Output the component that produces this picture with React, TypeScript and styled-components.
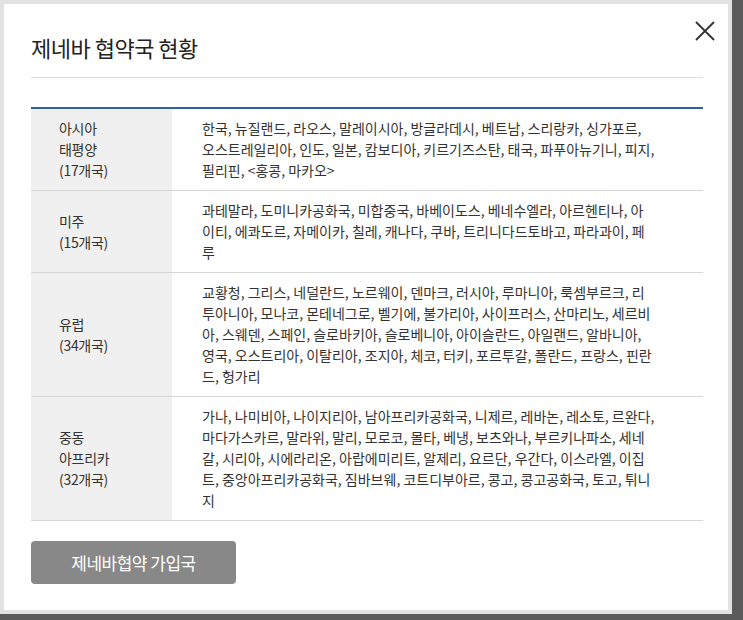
import React from 'react';
import styled, { createGlobalStyle } from 'styled-components';

const Global = createGlobalStyle`
  html, body { margin: 0; padding: 0; }
  body {
    background: #5b5b5b;
    font-family: "Noto Sans CJK KR", "Noto Sans", sans-serif;
  }
`;

const Overlay = styled.div`
  width: 743px;
  height: 620px;
  box-sizing: border-box;
  padding: 0 11px 6px 0;
  background: #5b5b5b;
`;

const Frame = styled.div`
  height: 100%;
  box-sizing: border-box;
  border: 4px solid #e2e2e2;
  background: #fff;
`;

const Modal = styled.div`
  position: relative;
  padding: 0 25px 0 27px;
`;

const Title = styled.h2`
  margin: 0;
  padding: 27px 0 14px;
  font-size: 22px;
  font-weight: 400;
  color: #222;
  letter-spacing: -0.5px;
  border-bottom: 1px solid #ddd;
`;

const Close = styled.button`
  position: absolute;
  top: 14px;
  right: 10px;
  width: 26px;
  height: 26px;
  border: 0;
  background: none;
  padding: 0;
  cursor: pointer;
`;

const Table = styled.table`
  margin-top: 29px;
  width: 100%;
  border-collapse: collapse;
  border-top: 2px solid #2c5fa8;
`;

const Row = styled.tr`
  border-bottom: 1px solid #d6d6d6;
`;

const Head = styled.th`
  width: 141px;
  box-sizing: border-box;
  background: #f0f0f0;
  text-align: left;
  font-weight: 400;
  font-size: 14px;
  line-height: 21px;
  color: #333;
  padding: 9px 0 9px 28px;
  letter-spacing: -0.3px;
`;

const Cell = styled.td`
  font-size: 14px;
  line-height: 21px;
  color: #333;
  padding: 9px 48px 9px 30px;
  letter-spacing: 0;
  word-break: break-all;
`;

const Button = styled.button`
  margin-top: 20px;
  width: 205px;
  height: 43px;
  border: 0;
  border-radius: 4px;
  background: #888;
  color: #fff;
  font-family: inherit;
  font-size: 17px;
  letter-spacing: -0.5px;
`;

const rows = [
  { head: ['아시아', '태평양', '(17개국)'], body: '한국, 뉴질랜드, 라오스, 말레이시아, 방글라데시, 베트남, 스리랑카, 싱가포르, 오스트레일리아, 인도, 일본, 캄보디아, 키르기즈스탄, 태국, 파푸아뉴기니, 피지, 필리핀, <홍콩, 마카오>' },
  { head: ['미주', '(15개국)'], body: '과테말라, 도미니카공화국, 미합중국, 바베이도스, 베네수엘라, 아르헨티나, 아이티, 에콰도르, 자메이카, 칠레, 캐나다, 쿠바, 트리니다드토바고, 파라과이, 페루' },
  { head: ['유럽', '(34개국)'], body: '교황청, 그리스, 네덜란드, 노르웨이, 덴마크, 러시아, 루마니아, 룩셈부르크, 리투아니아, 모나코, 몬테네그로, 벨기에, 불가리아, 사이프러스, 산마리노, 세르비아, 스웨덴, 스페인, 슬로바키아, 슬로베니아, 아이슬란드, 아일랜드, 알바니아, 영국, 오스트리아, 이탈리아, 조지아, 체코, 터키, 포르투갈, 폴란드, 프랑스, 핀란드, 헝가리' },
  { head: ['중동', '아프리카', '(32개국)'], body: '가나, 나미비아, 나이지리아, 남아프리카공화국, 니제르, 레바논, 레소토, 르완다, 마다가스카르, 말라위, 말리, 모로코, 몰타, 베냉, 보츠와나, 부르키나파소, 세네갈, 시리아, 시에라리온, 아랍에미리트, 알제리, 요르단, 우간다, 이스라엘, 이집트, 중앙아프리카공화국, 짐바브웨, 코트디부아르, 콩고, 콩고공화국, 토고, 튀니지' },
];

export default function App() {
  return (
    <Overlay>
      <Global />
      <Frame>
        <Modal>
          <Title>제네바 협약국 현황</Title>
          <Close aria-label="닫기">
            <svg width="26" height="26" viewBox="0 0 26 26">
              <path d="M4 4 L22 22 M22 4 L4 22" stroke="#333" strokeWidth="1.8" fill="none" />
            </svg>
          </Close>
          <Table>
            <tbody>
              {rows.map((r) => (
                <Row key={r.head[0]}>
                  <Head>{r.head.map((h) => <div key={h}>{h}</div>)}</Head>
                  <Cell>{r.body}</Cell>
                </Row>
              ))}
            </tbody>
          </Table>
          <Button>제네바협약 가입국</Button>
        </Modal>
      </Frame>
    </Overlay>
  );
}
